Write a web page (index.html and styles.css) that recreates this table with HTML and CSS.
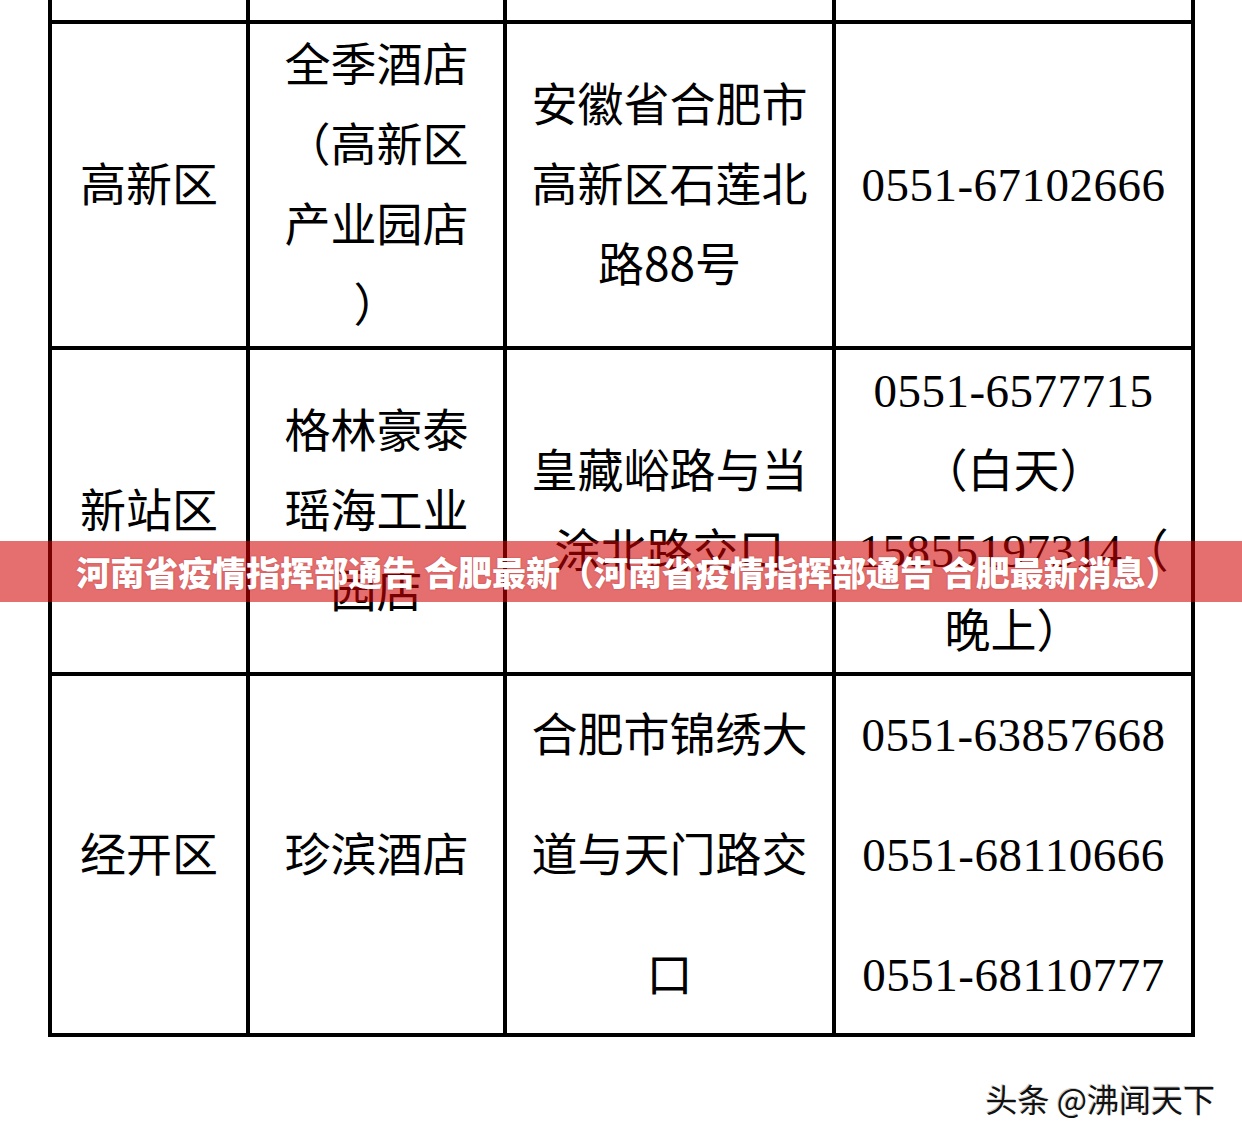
FILE: index.html
```html
<!DOCTYPE html>
<html lang="zh-CN">
<head>
<meta charset="utf-8">
<title>河南省疫情指挥部通告 合肥最新</title>
<link rel="stylesheet" href="styles.css">
</head>
<body>
<div class="page">
  <div class="sheet">
    <div class="cell top"></div>
    <div class="cell top"></div>
    <div class="cell top"></div>
    <div class="cell top"></div>

    <div class="cell"><div class="txt">高新区</div></div>
    <div class="cell"><div class="txt">全季酒店<br>（高新区<br>产业园店<br>）</div></div>
    <div class="cell"><div class="txt">安徽省合肥市<br>高新区石莲北<br>路88号</div></div>
    <div class="cell"><div class="txt"><span class="num">0551-67102666</span></div></div>

    <div class="cell"><div class="txt">新站区</div></div>
    <div class="cell"><div class="txt">格林豪泰<br>瑶海工业<br>园店</div></div>
    <div class="cell"><div class="txt">皇藏峪路与当<br>涂北路交口</div></div>
    <div class="cell"><div class="txt"><span class="num">0551-6577715</span><br>（白天）<br><span class="num">15855197314</span>（<br>晚上）</div></div>

    <div class="cell tall"><div class="txt">经开区</div></div>
    <div class="cell tall"><div class="txt">珍滨酒店</div></div>
    <div class="cell tall"><div class="txt">合肥市锦绣大<br>道与天门路交<br>口</div></div>
    <div class="cell tall"><div class="txt"><span class="num">0551-63857668</span><br><span class="num">0551-68110666</span><br><span class="num">0551-68110777</span></div></div>
  </div>

  <div class="credit">头条 @沸闻天下</div>

  <div class="banner">河南省疫情指挥部通告 合肥最新（河南省疫情指挥部通告 合肥最新消息）</div>
</div>
</body>
</html>
```
FILE: styles.css
```css
html, body {
  margin: 0;
  padding: 0;
  background: #ffffff;
}

.page {
  position: relative;
  width: 1242px;
  height: 1144px;
  overflow: hidden;
  background: #ffffff;
  font-family: "Noto Sans CJK SC", "Noto Sans", sans-serif;
  color: #000000;
}

.sheet {
  margin-left: 48px;
  width: 1147px;
  box-sizing: border-box;
  display: grid;
  grid-template-columns: 194px 253px 325px 355px;
  grid-template-rows: 20px 322px 322px 357px;
  gap: 4px;
  padding: 0 4px 4px 4px;
  background: #000000;
}

.cell {
  background: #ffffff;
  display: flex;
  align-items: center;
  justify-content: center;
  box-sizing: border-box;
  padding-bottom: 8px;
}

.cell.top {
  padding: 0;
}

.txt {
  text-align: center;
  font-size: 46px;
  line-height: 80px;
  font-weight: 400;
  white-space: nowrap;
}

.cell.tall .txt {
  line-height: 120px;
}

.num {
  font-family: "Liberation Serif", "Times New Roman", serif;
  font-size: 47px;
  letter-spacing: 0.5px;
  line-height: 0;
}

.credit {
  margin-top: 41px;
  padding-right: 27px;
  text-align: right;
  font-size: 32px;
  line-height: 40px;
  color: #111111;
  font-weight: 400;
  text-shadow: 1px 1px 0 #ffffff, -1px -1px 0 #c8c8c8;
}

.banner {
  position: absolute;
  left: 0;
  top: 541px;
  width: 100%;
  box-sizing: border-box;
  padding-left: 14px;
  height: 61px;
  line-height: 61px;
  background: rgba(209, 0, 0, 0.57);
  color: #ffffff;
  text-align: center;
  font-size: 34px;
  font-weight: 900;
  white-space: nowrap;
  text-shadow: 0 0 2px rgba(120, 0, 0, 0.35);
}
```
